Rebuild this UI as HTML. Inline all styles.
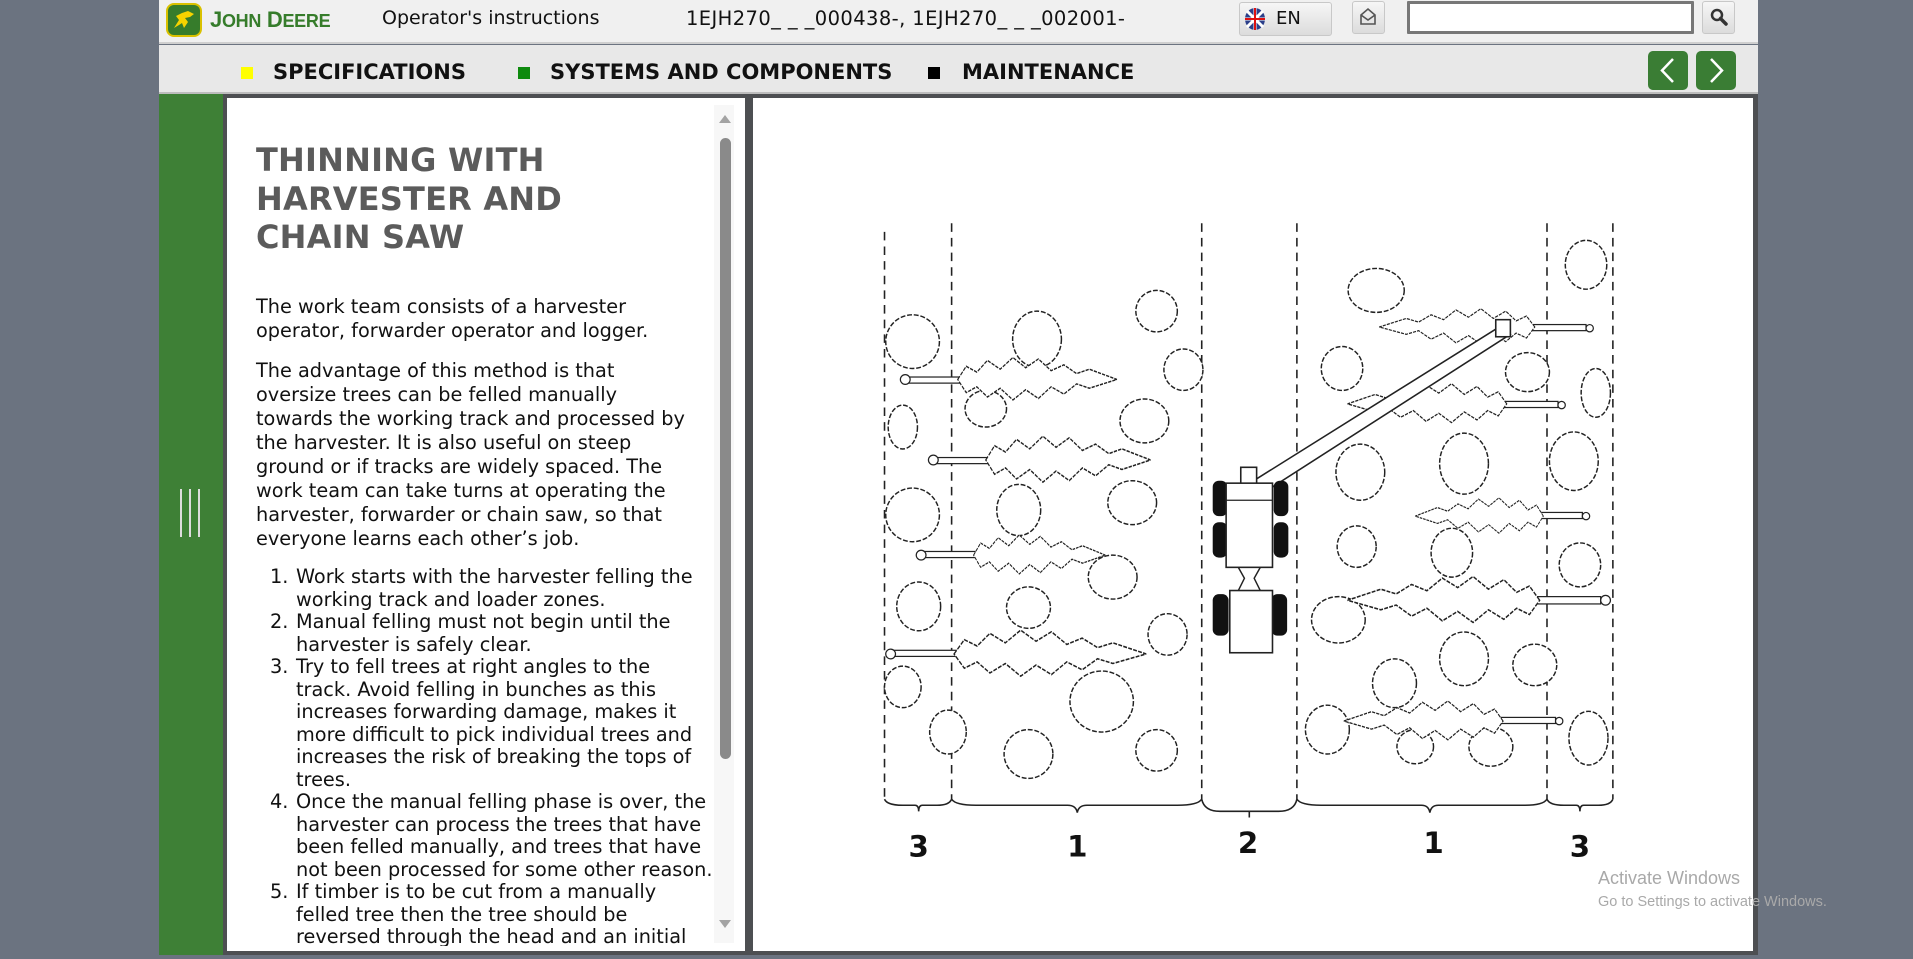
<!DOCTYPE html>
<html><head><meta charset="utf-8">
<style>
*{margin:0;padding:0;box-sizing:border-box}
body{width:1913px;height:959px;overflow:hidden;background:#6b7380;position:relative;font-family:"DejaVu Sans","Liberation Sans",sans-serif}
.abs{position:absolute}
#hdr{left:159px;top:0;width:1599px;height:44px;background:#f0f0f0;border-bottom:2px solid #cfcfcf}
#nav{left:159px;top:45px;width:1599px;height:49px;background:#e8e8e8;border-bottom:2px solid #bdbdbd}
.navt{top:60px;font-weight:bold;font-size:21px;color:#111;white-space:nowrap}
.sq{top:67px;width:12px;height:12px}
.btn{background:linear-gradient(#f6f6f6,#dcdcdc);border:1px solid #c8c8c8;border-radius:3px}
.garr{top:51px;width:40px;height:39px;background:#3a7d34;border-radius:5px}
#side{left:159px;top:94px;width:64px;height:861px;background:#3e8036}
#lp{left:223px;top:94px;width:530px;height:861px;background:#fff;border:4px solid #4d4f52;border-right-width:8px}
#rp{left:753px;top:94px;width:1005px;height:861px;background:#fff;border:4px solid #4d4f52;border-left:none;border-right-width:5px}
.t{left:256px;font-size:19.3px;line-height:24px;color:#111;white-space:nowrap}
.li{font-size:19.3px;line-height:22.5px;color:#111;white-space:nowrap;position:absolute}
</style></head><body>
<div id="hdr" class="abs"></div>
<div class="abs" style="left:166px;top:3px;width:36px;height:34px;background:#367c2b;border-radius:8px;border:2px solid #d9c100"></div>
<svg class="abs" style="left:170px;top:8px" width="28" height="24" viewBox="0 0 28 24"><path d="M4 20 L9 12 L6 8 L12 5 L18 3 L24 6 L20 9 L15 10 L18 14 L14 20 L12 15 L9 17 Z" fill="#f5d300"/></svg>
<div class="abs" style="left:210px;top:7px;font-family:'Liberation Sans',sans-serif;font-size:22px;font-weight:bold;color:#367c2b;letter-spacing:-0.3px;white-space:nowrap">J<span style="font-size:18px">OHN</span> D<span style="font-size:18px">EERE</span></div>
<div class="abs" style="left:382px;top:7px;font-size:19px;color:#111;white-space:nowrap">Operator's instructions</div>
<div class="abs" style="left:686px;top:7px;font-size:19.5px;letter-spacing:0.4px;color:#111;white-space:nowrap">1EJH270_ _ _000438-, 1EJH270_ _ _002001-</div>
<div class="abs btn" style="left:1239px;top:2px;width:93px;height:34px"></div>
<svg class="abs" style="left:1244px;top:7px" width="22" height="24" viewBox="0 0 22 24"><ellipse cx="11" cy="12" rx="10" ry="11" fill="#2b3f8a"/><path d="M1 12H21M11 1V23M3 4L19 20M19 4L3 20" stroke="#fff" stroke-width="3"/><path d="M1 12H21M11 1V23" stroke="#d11" stroke-width="2"/></svg>
<div class="abs" style="left:1276px;top:8px;font-size:18px;color:#111">EN</div>
<div class="abs btn" style="left:1352px;top:1px;width:33px;height:33px"></div>
<svg class="abs" style="left:1358px;top:7px" width="20" height="20" viewBox="0 0 20 20"><path d="M3 8 L10 2 L17 8 V17 H3 Z M3 8 L10 13 L17 8" fill="none" stroke="#555" stroke-width="1.6"/></svg>
<div class="abs" style="left:1407px;top:1px;width:287px;height:33px;background:#fff;border:3px solid #777;border-radius:1px"></div>
<div class="abs btn" style="left:1702px;top:1px;width:33px;height:33px"></div>
<svg class="abs" style="left:1709px;top:7px" width="20" height="20" viewBox="0 0 20 20"><circle cx="8" cy="8" r="5" fill="none" stroke="#333" stroke-width="2.5"/><path d="M11.5 11.5 L17 17" stroke="#333" stroke-width="3.5" stroke-linecap="round"/></svg>

<div id="nav" class="abs"></div>
<div class="abs sq" style="left:241px;background:#ffff00"></div>
<div class="abs navt" style="left:273px">SPECIFICATIONS</div>
<div class="abs sq" style="left:518px;background:#0e8a0e"></div>
<div class="abs navt" style="left:550px">SYSTEMS AND COMPONENTS</div>
<div class="abs sq" style="left:928px;background:#000"></div>
<div class="abs navt" style="left:962px">MAINTENANCE</div>
<div class="abs garr" style="left:1648px"></div>
<div class="abs garr" style="left:1696px"></div>
<svg class="abs" style="left:1648px;top:51px" width="88" height="39" viewBox="0 0 88 39"><path d="M25 8 L14 19.5 L25 31" fill="none" stroke="#fff" stroke-width="2.5"/><path d="M63 8 L74 19.5 L63 31" fill="none" stroke="#fff" stroke-width="2.5"/></svg>

<div id="side" class="abs"></div>
<div class="abs" style="left:180px;top:489px;width:2px;height:48px;background:#ddd"></div>
<div class="abs" style="left:189px;top:489px;width:2px;height:48px;background:#ddd"></div>
<div class="abs" style="left:198px;top:489px;width:2px;height:48px;background:#ddd"></div>

<div id="lp" class="abs"></div>
<div id="rp" class="abs"></div>

<div class="abs" style="left:714px;top:105px;width:20px;height:838px;background:#f7f7f7"></div>
<div class="abs" style="left:719px;top:115px;width:0;height:0;border-left:6px solid transparent;border-right:6px solid transparent;border-bottom:8px solid #a3a3a3"></div>
<div class="abs" style="left:719px;top:920px;width:0;height:0;border-left:6px solid transparent;border-right:6px solid transparent;border-top:8px solid #a3a3a3"></div>
<div class="abs" style="left:720px;top:138px;width:11px;height:621px;background:#8a8a8a;border-radius:6px"></div>

<div class="abs" style="left:256px;top:141px;font-size:32px;letter-spacing:0.2px;line-height:38.5px;font-weight:bold;color:#5b5b5b;white-space:nowrap">THINNING WITH<br>HARVESTER AND<br>CHAIN SAW</div>

<div class="abs t" style="top:295px">The work team consists of a harvester<br>operator, forwarder operator and logger.</div>
<div class="abs t" style="top:359px">The advantage of this method is that<br>oversize trees can be felled manually<br>towards the working track and processed by<br>the harvester. It is also useful on steep<br>ground or if tracks are widely spaced. The<br>work team can take turns at operating the<br>harvester, forwarder or chain saw, so that<br>everyone learns each other’s job.</div>
<div style="position:absolute;left:0;top:0;width:745px;height:946px;overflow:hidden">
<div class="li" style="left:270px;top:566px">1.<br><br>2.<br><br>3.<br><br><br><br><br><br>4.<br><br><br><br>5.</div>
<div class="li" style="left:296px;top:566px">Work starts with the harvester felling the<br>working track and loader zones.<br>Manual felling must not begin until the<br>harvester is safely clear.<br>Try to fell trees at right angles to the<br>track. Avoid felling in bunches as this<br>increases forwarding damage, makes it<br>more difficult to pick individual trees and<br>increases the risk of breaking the tops of<br>trees.<br>Once the manual felling phase is over, the<br>harvester can process the trees that have<br>been felled manually, and trees that have<br>not been processed for some other reason.<br>If timber is to be cut from a manually<br>felled tree then the tree should be<br>reversed through the head and an initial</div>
</div>

<svg class="abs" style="left:0;top:0" width="1913" height="959" viewBox="0 0 1568 786">
<defs>
<path id="cr" d="M0,0 L8,-9 L18,-5 L28,-13 L40,-7 L52,-15 L64,-8 L76,-14 L88,-6 L100,-10 L112,-4 L124,-7 L150,0 L124,6 L112,3 L100,10 L88,5 L76,13 L64,7 L52,14 L40,6 L28,12 L18,5 L8,9 Z" fill="#fff" stroke="#222" stroke-width="1" stroke-dasharray="3 1"/>
</defs>
<g fill="none" stroke="#222" stroke-width="1.3" stroke-dasharray="7 5">
<line x1="725" y1="190" x2="725" y2="655"/><line x1="780" y1="183" x2="780" y2="655"/>
<line x1="985" y1="183" x2="985" y2="655"/><line x1="1063" y1="183" x2="1063" y2="655"/>
<line x1="1268" y1="183" x2="1268" y2="655"/><line x1="1322" y1="183" x2="1322" y2="655"/>
</g>
<g fill="#fff" stroke="#222" stroke-width="1.2" stroke-dasharray="4 1.5">
<ellipse cx="748" cy="280" rx="22" ry="22"/><ellipse cx="850" cy="278" rx="20" ry="23"/><ellipse cx="948" cy="255" rx="17" ry="17"/><ellipse cx="970" cy="303" rx="16" ry="17"/><ellipse cx="740" cy="350" rx="12" ry="18"/><ellipse cx="808" cy="335" rx="17" ry="15"/><ellipse cx="938" cy="345" rx="20" ry="18"/><ellipse cx="835" cy="418" rx="18" ry="21"/><ellipse cx="928" cy="412" rx="20" ry="18"/><ellipse cx="748" cy="422" rx="22" ry="22"/><ellipse cx="912" cy="473" rx="20" ry="18"/><ellipse cx="753" cy="497" rx="18" ry="20"/><ellipse cx="843" cy="498" rx="18" ry="17"/><ellipse cx="957" cy="520" rx="16" ry="17"/><ellipse cx="740" cy="563" rx="15" ry="17"/><ellipse cx="903" cy="575" rx="26" ry="25"/><ellipse cx="777" cy="600" rx="15" ry="18"/><ellipse cx="843" cy="618" rx="20" ry="20"/><ellipse cx="948" cy="615" rx="17" ry="17"/>
<ellipse cx="1128" cy="238" rx="23" ry="18"/><ellipse cx="1300" cy="217" rx="17" ry="20"/><ellipse cx="1100" cy="302" rx="17" ry="18"/><ellipse cx="1252" cy="305" rx="18" ry="16"/><ellipse cx="1308" cy="322" rx="12" ry="20"/><ellipse cx="1115" cy="387" rx="20" ry="23"/><ellipse cx="1200" cy="380" rx="20" ry="25"/><ellipse cx="1290" cy="378" rx="20" ry="24"/><ellipse cx="1112" cy="448" rx="16" ry="17"/><ellipse cx="1190" cy="453" rx="17" ry="20"/><ellipse cx="1295" cy="463" rx="17" ry="18"/><ellipse cx="1097" cy="508" rx="22" ry="19"/><ellipse cx="1200" cy="540" rx="20" ry="22"/><ellipse cx="1258" cy="545" rx="18" ry="17"/><ellipse cx="1143" cy="560" rx="18" ry="20"/><ellipse cx="1302" cy="605" rx="16" ry="22"/><ellipse cx="1088" cy="598" rx="18" ry="20"/><ellipse cx="1222" cy="612" rx="18" ry="16"/><ellipse cx="1160" cy="612" rx="15" ry="14"/>
</g>
<g stroke="#222" stroke-width="1" fill="#fff">
<rect x="745" y="309" width="45" height="5"/><circle cx="742" cy="311" r="4"/><use href="#cr" transform="translate(785,311) scale(0.87,1.2)"/>
<rect x="768" y="375" width="45" height="5"/><circle cx="765" cy="377" r="4"/><use href="#cr" transform="translate(808,377) scale(0.9,1.3)"/>
<rect x="758" y="452" width="45" height="5"/><circle cx="755" cy="455" r="4"/><use href="#cr" transform="translate(798,455) scale(0.72,1.1)"/>
<rect x="732" y="533" width="55" height="5"/><circle cx="730" cy="536" r="4"/><use href="#cr" transform="translate(782,536) scale(1.05,1.3)"/>
<rect x="1255" y="266" width="45" height="5"/><circle cx="1303" cy="269" r="3"/><use href="#cr" transform="translate(1258,268) scale(-0.85,1)"/>
<rect x="1232" y="329" width="45" height="5"/><circle cx="1280" cy="332" r="3"/><use href="#cr" transform="translate(1235,331) scale(-0.87,1.1)"/>
<rect x="1262" y="420" width="35" height="5"/><circle cx="1300" cy="423" r="3"/><use href="#cr" transform="translate(1265,423) scale(-0.7,1)"/>
<rect x="1260" y="489" width="52" height="6"/><circle cx="1316" cy="492" r="4"/><use href="#cr" transform="translate(1262,492) scale(-1.05,1.3)"/>
<rect x="1230" y="588" width="45" height="5"/><circle cx="1278" cy="591" r="3"/><use href="#cr" transform="translate(1232,591) scale(-0.87,1.1)"/>
</g>
<g stroke="#222" stroke-width="1.3" fill="#fff">
<polygon points="1018,400 1232,266 1238,274 1026,410"/>
<rect x="1226" y="262" width="12" height="14"/>
<rect x="1017" y="383" width="13" height="16"/>
</g>
<g>
<rect x="994" y="394" width="12" height="29" rx="5" fill="#111"/><rect x="994" y="428" width="12" height="29" rx="5" fill="#111"/>
<rect x="1044" y="394" width="12" height="29" rx="5" fill="#111"/><rect x="1044" y="428" width="12" height="29" rx="5" fill="#111"/>
<rect x="994" y="487" width="13" height="34" rx="5" fill="#111"/><rect x="1042" y="487" width="13" height="34" rx="5" fill="#111"/>
<rect x="1005" y="396" width="38" height="69" fill="#fff" stroke="#222" stroke-width="1.3"/>
<line x1="1005" y1="410" x2="1043" y2="410" stroke="#222"/>
<path d="M1015 465 L1020 474 L1015 484 M1033 465 L1028 474 L1033 484" fill="none" stroke="#222" stroke-width="1.2"/>
<rect x="1008" y="484" width="35" height="51" fill="#fff" stroke="#222" stroke-width="1.3"/>
</g>
<g fill="none" stroke="#222" stroke-width="1.3">
<path d="M725 655 Q727 660 740 660 L750 660 Q753 660 753 665 Q753 660 756 660 L768 660 Q778 660 780 655"/>
<path d="M780 655 Q783 660 800 660 L875 660 Q882 660 883 666 Q884 660 891 660 L965 660 Q982 660 985 655"/>
<path d="M985 655 Q987 665 1000 665 L1048 665 Q1061 665 1063 655 M1024 665 L1024 670"/>
<path d="M1063 655 Q1066 660 1083 660 L1165 660 Q1171 660 1172 666 Q1173 660 1179 660 L1250 660 Q1265 660 1268 655"/>
<path d="M1268 655 Q1270 660 1282 660 L1292 660 Q1295 660 1295 665 Q1295 660 1298 660 L1310 660 Q1320 660 1322 655"/>
</g>
<g font-family="DejaVu Sans, sans-serif" font-size="24" font-weight="bold" fill="#111" text-anchor="middle">
<text x="753" y="702">3</text><text x="883" y="702">1</text><text x="1023" y="699">2</text><text x="1175" y="699">1</text><text x="1295" y="702">3</text>
</g>
</svg>

<div class="abs" style="left:1598px;top:868px;font-family:'Liberation Sans',sans-serif;font-size:18px;color:#a9a9a9;white-space:nowrap">Activate Windows</div>
<div class="abs" style="left:1598px;top:894px;font-family:'Liberation Sans',sans-serif;font-size:14.5px;color:#a9a9a9;white-space:nowrap">Go to Settings to activate Windows.</div>
</body></html>
